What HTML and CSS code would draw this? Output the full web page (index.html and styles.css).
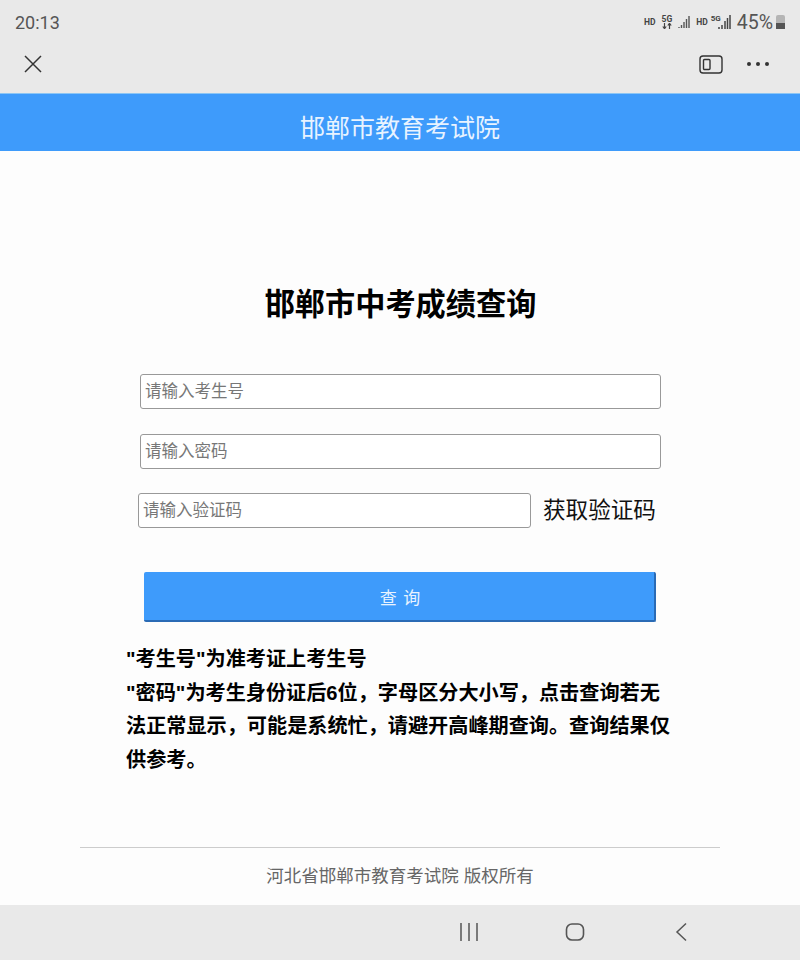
FILE: index.html
```html
<!DOCTYPE html>
<html lang="zh-CN">
<head>
    <meta charset="UTF-8">
    <meta name="viewport" content="width=device-width, initial-scale=1.0">
    <title>邯郸市中考成绩查询</title>
    <link rel="stylesheet" href="styles.css">
</head>
<body>
    <div class="status-bar">
        <span class="time">20:13</span>
        <div class="status-icons">
            <span class="hd">HD</span>
            <span class="net">
                <span>5G</span>
                <svg width="10" height="6" viewBox="0 0 10 6"><path d="M2.500 0v5.500M.8 3.500l1.700 2.200 1.700-2.200M7.500 6V.5M5.800 2.500L7.500.3l1.700 2.200" fill="none" stroke="#444" stroke-width="1.200"/></svg>
            </span>
            <svg width="12" height="12" viewBox="0 0 12 12"><path d="M1 12v-1M3.500 12V9M6 12V6M8.500 12V3M11 12V0" fill="none" stroke="#555" stroke-width="1.400"/></svg>
            <span class="hd">HD</span>
            <span class="net-small">5G</span>
            <svg width="13" height="14" viewBox="0 0 13 14"><path d="M1 14v-2M4 14v-4M7 14V6M9.500 14V3M12 14V0" fill="none" stroke="#444" stroke-width="1.500"/></svg>
            <span class="battery-text">45%</span>
            <span class="battery"><span class="battery-level"></span></span>
        </div>
    </div>

    <div class="toolbar">
        <svg width="20" height="20" viewBox="0 0 20 20"><path d="M2 2l16 16M18 2L2 18" fill="none" stroke="#333" stroke-width="1.500"/></svg>
        <div class="toolbar-right">
            <svg width="24" height="19" viewBox="0 0 24 19"><rect x="1" y="1" width="22" height="17" rx="3" fill="none" stroke="#333" stroke-width="1.400"/><rect x="4.500" y="4.500" width="6.500" height="10" rx="1" fill="none" stroke="#333" stroke-width="1.400"/></svg>
            <div class="dots"><span></span><span></span><span></span></div>
        </div>
    </div>

    <div class="header">邯郸市教育考试院</div>

    <div class="content">
        <h2>邯郸市中考成绩查询</h2>

        <form class="query-form">
            <input type="text" class="field" placeholder="请输入考生号">
            <input type="password" class="field" placeholder="请输入密码">
            <div class="code-row">
                <input type="text" class="field field-code" placeholder="请输入验证码">
                <span class="get-code">获取验证码</span>
            </div>
            <button type="button" class="submit-btn">查 询</button>
        </form>

        <div class="notes">
            <p>"考生号"为准考证上考生号</p>
            <p>"密码"为考生身份证后6位，字母区分大小写，点击查询若无法正常显示，可能是系统忙，请避开高峰期查询。查询结果仅供参考。</p>
        </div>

        <div class="footer">河北省邯郸市教育考试院 版权所有</div>
    </div>

    <div class="nav-bar">
        <svg width="20" height="18" viewBox="0 0 20 18"><path d="M2 0v18M10 0v18M18 0v18" fill="none" stroke="#555" stroke-width="1.500"/></svg>
        <svg width="20" height="20" viewBox="0 0 20 20"><rect x="1.500" y="2" width="17" height="16" rx="5.500" fill="none" stroke="#555" stroke-width="1.600"/></svg>
        <svg class="nav-back" width="12" height="20" viewBox="0 0 12 20"><path d="M11 1.500L2 10l9 8.500" fill="none" stroke="#555" stroke-width="1.500"/></svg>
    </div>
</body>
</html>
```

FILE: styles.css
```css
* {
    box-sizing: border-box;
}

body {
    font-family: "Liberation Sans", "Noto Sans CJK SC", sans-serif;
    background-color: #fdfdfd;
    margin: 0;
    padding: 0;
    width: 800px;
    height: 960px;
    overflow: hidden;
}

.status-bar {
    height: 44px;
    background-color: #e9e9e9;
    display: flex;
    align-items: center;
    justify-content: space-between;
    padding: 0 15px;
    color: #555;
}

.time {
    font-family: "Roboto", sans-serif;
    font-size: 18px;
}

.status-icons {
    display: flex;
    align-items: center;
    gap: 6px;
}

.hd {
    font-family: "Roboto", sans-serif;
    font-size: 8.500px;
    font-weight: 700;
    color: #444;
}

.net {
    display: flex;
    flex-direction: column;
    align-items: center;
    font-family: "Roboto", sans-serif;
    font-size: 8.500px;
    font-weight: 700;
    line-height: 8px;
    color: #444;
}

.net-small {
    font-family: "Roboto", sans-serif;
    font-size: 8px;
    font-weight: 700;
    color: #444;
    margin: 0 -9px 8px -3px;
}

.battery-text {
    font-family: "Roboto", sans-serif;
    font-size: 19.500px;
    color: #555;
}

.battery {
    width: 9px;
    height: 14px;
    margin-left: -3px;
    background-color: #b5b5b5;
    border-radius: 2px 2px 1px 1px;
    display: flex;
    align-items: flex-end;
}

.battery-level {
    width: 100%;
    height: 6px;
    background-color: #555;
}

.toolbar {
    height: 49px;
    background-color: #e9e9e9;
    display: flex;
    align-items: center;
    justify-content: space-between;
    padding: 0 31px 9px 23px;
}

.toolbar-right {
    display: flex;
    align-items: center;
    gap: 24px;
}

.dots {
    display: flex;
    gap: 5px;
}

.dots span {
    width: 4px;
    height: 4px;
    border-radius: 50%;
    background-color: #333;
}

.header {
    height: 58px;
    background-color: #3e9bfb;
    border-top: 1px solid #8cc6f5;
    color: #e8f3ff;
    font-size: 25px;
    line-height: 68px;
    text-align: center;
}

.content {
    height: 754px;
    padding-top: 134px;
}

h2 {
    margin: 0 0 0 1px;
    font-size: 30.200px;
    line-height: 40px;
    font-weight: 700;
    color: #000;
    text-align: center;
}

.query-form {
    margin-top: 49px;
    padding-left: 138px;
    width: 661px;
    display: flex;
    flex-direction: column;
    align-items: flex-end;
    gap: 25px;
}

.field {
    width: 521px;
    height: 35px;
    padding: 0 4px;
    border: 1px solid #999;
    border-radius: 3px;
    background-color: #fff;
    font-family: inherit;
    font-size: 16.500px;
}

.field::placeholder {
    color: #777;
}

.code-row {
    width: 100%;
    margin-top: -1px;
    display: flex;
    align-items: center;
}

.field-code {
    width: 393px;
}

.get-code {
    margin-left: 12px;
    font-size: 22.600px;
    line-height: 28px;
    color: #111;
    white-space: nowrap;
}

.submit-btn {
    align-self: flex-start;
    width: 512px;
    height: 50px;
    margin: 19px 0 0 6px;
    padding-left: 9px;
    border: none;
    border-bottom: 2px solid #2a6bb5;
    border-right: 2px solid #2a6bb5;
    border-radius: 2px;
    background-color: #3e9bfb;
    color: #e8f3ff;
    font-family: inherit;
    font-size: 17px;
    letter-spacing: 1px;
}

.notes {
    margin: 21px 0 0 126px;
    width: 552px;
    font-size: 20.150px;
    line-height: 33.500px;
    font-weight: 700;
    color: #000;
}

.notes p {
    margin: 0;
}

.footer {
    margin: 70px 80px 0;
    padding-top: 16px;
    border-top: 1px solid #ccc;
    font-size: 17.500px;
    line-height: 24px;
    color: #666;
    text-align: center;
}

.nav-bar {
    height: 55px;
    background-color: #e9e9e9;
    display: flex;
    align-items: center;
    padding: 0 0 2px 459px;
    gap: 86px;
}

.nav-back {
    margin-left: 4px;
}
```
